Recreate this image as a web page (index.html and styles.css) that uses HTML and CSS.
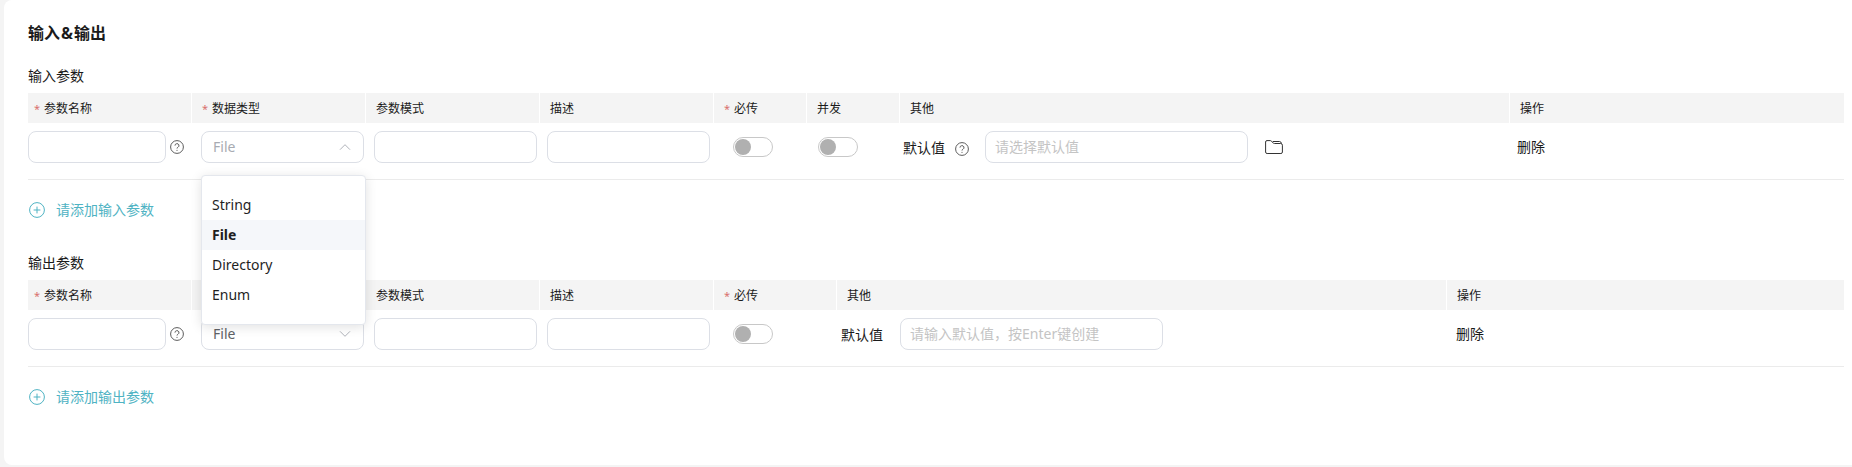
FILE: index.html
```html
<!DOCTYPE html>
<html lang="zh-CN">
<head>
    <meta charset="UTF-8">
    <meta name="viewport" content="width=device-width, initial-scale=1.0">
    <title>输入&amp;输出</title>
    <link rel="stylesheet" href="styles.css">
</head>
<body>
    <svg class="sprite">
        <symbol id="help" viewBox="0 0 14 14">
            <circle cx="7" cy="7" r="6.4"/>
            <path d="M5 5.6a2 1.9 0 1 1 3 1.6q-1 .5-1 1.3M7 9.9v1"/>
        </symbol>
        <symbol id="plus" viewBox="0 0 16 16">
            <circle cx="8" cy="8" r="7.4"/>
            <path d="M8 4.6v6.8M4.6 8h6.8"/>
        </symbol>
        <symbol id="arrow" viewBox="0 0 12 8">
            <path d="M1 1.3l5 5 5-5"/>
        </symbol>
        <symbol id="folder" viewBox="0 0 18 16">
            <path d="M.6 13V3Q.6 1.600 2 1.600h3.200q.6 0 1 .4l2.200 2.100q.4.4 1 .4h6.200q1.800 0 1.800 1.700V13q0 1.500-1.500 1.500H2.100Q.6 14.500 .6 13zM7.800 2.500h6.800q1.500 0 1.800 2"/>
        </symbol>
    </svg>

    <div class="card">
        <h2 class="title">输入<span class="amp">&amp;</span>输出</h2>

        <div class="section">
            <div class="label">输入参数</div>
            <div class="table-head head-in">
                <div class="th required">参数名称</div>
                <div class="th required">数据类型</div>
                <div class="th">参数模式</div>
                <div class="th">描述</div>
                <div class="th required">必传</div>
                <div class="th">并发</div>
                <div class="th">其他</div>
                <div class="th">操作</div>
            </div>
            <div class="table-row row-in">
                <div class="cell name">
                    <input type="text" class="input">
                    <svg class="help"><use href="#help"/></svg>
                </div>
                <div class="cell">
                    <div class="select open">
                        <span>File</span>
                        <svg class="arrow"><use href="#arrow"/></svg>
                        <ul class="dropdown">
                            <li>String</li>
                            <li class="selected">File</li>
                            <li>Directory</li>
                            <li>Enum</li>
                        </ul>
                    </div>
                </div>
                <div class="cell"><input type="text" class="input"></div>
                <div class="cell"><input type="text" class="input"></div>
                <div class="cell"><span class="switch"></span></div>
                <div class="cell"><span class="switch"></span></div>
                <div class="cell other">
                    <span class="other-label">默认值</span>
                    <svg class="help other-help"><use href="#help"/></svg>
                    <input type="text" class="input wide" placeholder="请选择默认值">
                    <svg class="folder"><use href="#folder"/></svg>
                </div>
                <div class="cell"><a class="delete">删除</a></div>
            </div>
            <a class="add">
                <svg class="plus"><use href="#plus"/></svg>
                <span>请添加输入参数</span>
            </a>
        </div>

        <div class="section">
            <div class="label">输出参数</div>
            <div class="table-head head-out">
                <div class="th required">参数名称</div>
                <div class="th required">数据类型</div>
                <div class="th">参数模式</div>
                <div class="th">描述</div>
                <div class="th required">必传</div>
                <div class="th">其他</div>
                <div class="th">操作</div>
            </div>
            <div class="table-row row-out">
                <div class="cell name">
                    <input type="text" class="input">
                    <svg class="help"><use href="#help"/></svg>
                </div>
                <div class="cell">
                    <div class="select">
                        <span>File</span>
                        <svg class="arrow"><use href="#arrow"/></svg>
                    </div>
                </div>
                <div class="cell"><input type="text" class="input"></div>
                <div class="cell"><input type="text" class="input"></div>
                <div class="cell"><span class="switch"></span></div>
                <div class="cell other">
                    <span class="other-label">默认值</span>
                    <input type="text" class="input wide" placeholder="请输入默认值，按Enter键创建">
                </div>
                <div class="cell"><a class="delete">删除</a></div>
            </div>
            <a class="add">
                <svg class="plus"><use href="#plus"/></svg>
                <span>请添加输出参数</span>
            </a>
        </div>
    </div>
</body>
</html>
```
FILE: styles.css
```css
* {
    box-sizing: border-box;
}
body {
    margin: 0;
    height: 467px;
    padding-left: 4px;
    background: #f4f4f4;
    color: #1a1a1a;
    font-family: "Noto Sans", "Noto Sans CJK SC", sans-serif;
    font-size: 14px;
    overflow: hidden;
}
svg {
    flex: none;
    fill: none;
    stroke: currentColor;
}
.sprite {
    display: none;
}
.card {
    height: 465px;
    padding: 21px 8px 0 24px;
    background: #fff;
    border-radius: 8px 0 0 8px;
}
.title {
    margin: 0 0 20px;
    font-size: 16px;
    line-height: 24px;
}
.amp {
    padding: 0 1px;
}
.section {
    height: 187px;
}
.label {
    height: 28px;
    line-height: 22px;
}
.table-head,
.table-row {
    display: grid;
}
.head-in {
    grid-template-columns: 164px 174px 174px 174px 93px 93px 610px 1fr;
}
.head-out {
    grid-template-columns: 164px 174px 174px 174px 123px 610px 1fr;
}
.row-in {
    grid-template-columns: 173px 173px 173px 186px 85px 85px 614px 1fr;
}
.row-out {
    grid-template-columns: 173px 173px 173px 186px 108px 615px 1fr;
}
.th {
    height: 30px;
    padding: 1px 0 0 10px;
    background: #f4f4f4;
    border-right: 1px solid #fff;
    font-size: 12px;
    line-height: 30px;
}
.th:first-child {
    padding-left: 6px;
}
.th:last-child {
    border-right: none;
}
.required::before {
    content: "*";
    margin-right: 4px;
    color: #d9706c;
    font-size: 11px;
}
.table-row {
    height: 57px;
    padding-top: 8px;
    border-bottom: 1px solid #ebebeb;
}
.cell {
    display: flex;
    align-items: center;
    height: 32px;
}
.input,
.select {
    width: 163px;
    height: 32px;
    padding: 0 9px 1px;
    background: #fff;
    border: 1px solid #dcdfe6;
    border-radius: 8px;
    font: inherit;
}
.input::placeholder {
    color: #c4c4c4;
    opacity: 1;
}
.name .input {
    width: 138px;
}
.input.wide {
    width: 263px;
}
.help {
    width: 14px;
    height: 14px;
    margin-left: 4px;
    color: #5c5c5c;
}
.select {
    position: relative;
    display: flex;
    align-items: center;
    justify-content: space-between;
    padding: 0 12px 0 11px;
    color: #606266;
}
.select span {
    padding-bottom: 1px;
}
.select.open {
    color: #a8abb2;
}
.arrow {
    width: 12px;
    height: 8px;
    color: #b0b3ba;
}
.open .arrow {
    transform: rotate(180deg);
}
.dropdown {
    position: absolute;
    top: 43px;
    left: -1px;
    z-index: 10;
    width: 165px;
    height: 150px;
    margin: 0;
    padding: 14px 0;
    background: #fff;
    border: 1px solid #e4e7ed;
    border-radius: 4px;
    box-shadow: 0 2px 12px rgba(0, 0, 0, 0.12);
    color: #1f1f1f;
    list-style: none;
}
.dropdown li {
    height: 30px;
    padding-left: 10px;
    line-height: 30px;
}
.dropdown .selected {
    background: #f5f7fa;
    font-weight: bold;
}
.switch {
    width: 40px;
    height: 20px;
    padding: 1px;
    border: 1px solid #c8c8c8;
    border-radius: 10px;
}
.switch::before {
    content: "";
    display: block;
    width: 16px;
    height: 16px;
    background: #b0b0b0;
    border-radius: 50%;
}
.other-label {
    width: 42px;
    padding-bottom: 1px;
    white-space: nowrap;
}
.other-help {
    margin: 4px 0 0 10px;
}
.other .wide {
    margin-left: 16px;
}
.row-out .wide {
    margin-left: 17px;
}
.folder {
    width: 18px;
    height: 16px;
    margin-left: 17px;
    color: #333;
}
.delete {
    padding-bottom: 3px;
}
.add {
    display: inline-flex;
    align-items: center;
    height: 59px;
    padding-left: 1px;
    color: #4fb3c3;
}
.add span {
    padding-bottom: 1px;
}
.plus {
    width: 16px;
    height: 16px;
    margin-right: 11px;
}
```
